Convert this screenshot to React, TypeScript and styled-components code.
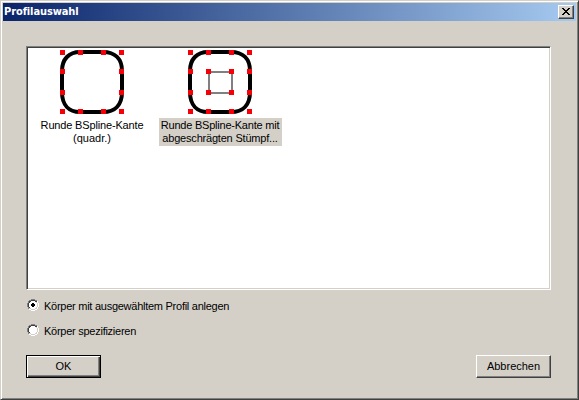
import React, { useState } from "react";
import styled, { createGlobalStyle } from "styled-components";

const GlobalStyle = createGlobalStyle`
  * { box-sizing: border-box; }
  body { margin: 0; }
`;

const Dialog = styled.div`
  width: 579px;
  height: 400px;
  padding: 1px;
  display: flex;
  flex-direction: column;
  background: #d4d0c8;
  border: 1px solid;
  border-color: #d4d0c8 #404040 #404040 #d4d0c8;
  box-shadow: inset 1px 1px #fff, inset -1px -1px #808080;
  font: 11px/13px "Liberation Sans", Arial, sans-serif;
  color: #000;
`;

const TitleBar = styled.div`
  height: 18px;
  margin: 1px 1px 0 1px;
  padding: 0 2px 0 1px;
  display: flex;
  align-items: center;
  justify-content: space-between;
  background: linear-gradient(90deg, #0a246a, #a6caf0);
`;

const Title = styled.span`
  color: #fff;
  font: bold 11px/16px "DejaVu Sans Condensed", "DejaVu Sans", Tahoma, sans-serif;
  letter-spacing: -0.1px;
`;

const CloseButton = styled.button`
  width: 16px;
  height: 14px;
  padding: 0 1px 1px 0;
  display: flex;
  align-items: center;
  justify-content: center;
  background: #d4d0c8;
  border: 1px solid;
  border-color: #fff #404040 #404040 #fff;
  box-shadow: inset -1px -1px #808080;
`;

const Content = styled.div`
  flex: 1;
  padding: 25px 26px 0 24px;
  display: flex;
  flex-direction: column;
`;

const ProfileList = styled.div`
  width: 525px;
  height: 244px;
  display: flex;
  background: #fff;
  border: 1px solid;
  border-color: #808080 #fff #fff #808080;
  box-shadow: inset 1px 1px #404040, inset -1px -1px #d4d0c8;
`;

const ProfileItem = styled.div`
  width: 128px;
  padding-top: 3px;
  display: flex;
  flex-direction: column;
  align-items: center;
  &:first-child { margin-left: 1px; }
`;

const Caption = styled.div<{ $selected: boolean }>`
  width: 123px;
  height: 28px;
  margin-top: 4px;
  padding-top: 1px;
  text-align: center;
  white-space: nowrap;
  background: ${(p) => (p.$selected ? "#d4d0c8" : "transparent")};
`;

const Line = styled.div<{ $spacing: number }>`
  letter-spacing: ${(p) => p.$spacing}px;
`;

const RadioGroup = styled.div`
  margin-top: 9px;
  display: flex;
  flex-direction: column;
  gap: 12px;
`;

const RadioRow = styled.div`
  height: 13px;
  display: flex;
  align-items: flex-start;
  gap: 5px;
  padding-left: 1px;
  white-space: nowrap;
`;

const RadioLabel = styled.span`
  letter-spacing: -0.26px;
  padding-top: 1px;
`;

const Buttons = styled.div`
  margin-top: 18px;
  display: flex;
  justify-content: space-between;
`;

const PushButton = styled.button<{ $primary?: boolean }>`
  width: 75px;
  height: 23px;
  padding: 0 0 1px;
  background: #d4d0c8;
  color: #000;
  font: inherit;
  border: 1px solid;
  border-color: ${(p) => (p.$primary ? "#000" : "#fff #404040 #404040 #fff")};
  box-shadow: ${(p) =>
    p.$primary
      ? "inset 1px 1px #fff, inset -1px -1px #404040, inset -2px -2px #808080"
      : "inset -1px -1px #808080"};
`;

const COLS = [0, 18, 41, 59];
const ROWS = [0, 19, 40, 59];

const isEdge = (i: number) => i === 0 || i === 3;

function ProfileIcon({ inner }: { inner: boolean }) {
  return (
    <svg width="64" height="64" viewBox="0 0 64 64">
      <path
        d="M20 2H43C55 2 62 9 62 21V42C62 55 55 62 43 62H20C9 62 2 55 2 42V21C2 9 9 2 20 2Z"
        fill="none"
        stroke="#000"
        strokeWidth="4"
      />
      {inner && <rect x="21" y="22" width="23" height="21" fill="none" stroke="#808080" strokeWidth="2" />}
      {ROWS.map((y, r) =>
        COLS.map((x, c) =>
          isEdge(r) || isEdge(c) || inner ? (
            <rect key={`${r}-${c}`} x={x} y={y} width="5" height="5" fill="#f60008" />
          ) : null
        )
      )}
    </svg>
  );
}

function Radio({ checked }: { checked: boolean }) {
  return (
    <svg width="12" height="12" viewBox="0 0 12 12" shapeRendering="crispEdges">
      <rect x="2" y="2" width="8" height="8" fill="#fff" />
      <path d="M4 0h4v1H4zM2 1h2v1H2zM8 1h2v1H8zM1 2h1v2H1zM0 4h1v4H0zM1 8h1v2H1z" fill="#808080" />
      <path d="M4 1h4v1H4zM2 2h2v1H2zM8 2h2v1H8zM2 3h1v1H2zM1 4h1v4H1zM2 8h1v1H2z" fill="#404040" />
      <path d="M10 2h1v2h-1zM11 4h1v4h-1zM10 8h1v2h-1zM8 10h2v1H8zM4 11h4v1H4zM2 10h2v1H2z" fill="#fff" />
      <path d="M9 3h1v1H9zM10 4h1v4h-1zM9 8h1v1H9zM8 9h2v1H8zM4 10h4v1H4zM2 9h2v1H2z" fill="#d4d0c8" />
      {checked && <path d="M5 4h2v1h1v2H7v1H5V7H4V5h1z" fill="#000" />}
    </svg>
  );
}

const PROFILES = [
  { inner: false, lines: [{ text: "Runde BSpline-Kante", spacing: -0.16 }, { text: "(quadr.)", spacing: 0 }] },
  { inner: true, lines: [{ text: "Runde BSpline-Kante mit", spacing: -0.22 }, { text: "abgeschrägten Stümpf...", spacing: -0.2 }] },
];

const OPTIONS = ["Körper mit ausgewähltem Profil anlegen", "Körper spezifizieren"];

export default function App() {
  const [profile, setProfile] = useState(1);
  const [option, setOption] = useState(0);
  return (
    <>
      <GlobalStyle />
      <Dialog>
        <TitleBar>
          <Title>Profilauswahl</Title>
          <CloseButton aria-label="Schließen">
            <svg width="8" height="7" viewBox="0 0 8 7" shapeRendering="crispEdges">
              <path d="M0 0h2v1h1v1h2V1h1V0h2v1H7v1H6v1H5v1h1v1h1v1h1v1H6V6H5V5H3v1H2v1H0V6h1V5h1V4h1V3H2V2H1V1H0z" />
            </svg>
          </CloseButton>
        </TitleBar>
        <Content>
          <ProfileList>
            {PROFILES.map((p, i) => (
              <ProfileItem key={i} onClick={() => setProfile(i)}>
                <ProfileIcon inner={p.inner} />
                <Caption $selected={profile === i}>
                  {p.lines.map((l) => (
                    <Line key={l.text} $spacing={l.spacing}>{l.text}</Line>
                  ))}
                </Caption>
              </ProfileItem>
            ))}
          </ProfileList>
          <RadioGroup>
            {OPTIONS.map((label, i) => (
              <RadioRow key={label} onClick={() => setOption(i)}>
                <Radio checked={option === i} />
                <RadioLabel>{label}</RadioLabel>
              </RadioRow>
            ))}
          </RadioGroup>
          <Buttons>
            <PushButton $primary>OK</PushButton>
            <PushButton>Abbrechen</PushButton>
          </Buttons>
        </Content>
      </Dialog>
    </>
  );
}
